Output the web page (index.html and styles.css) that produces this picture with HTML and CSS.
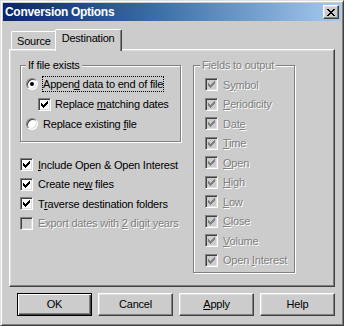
FILE: index.html
```html
<!DOCTYPE html>
<html lang="en">
<head>
  <meta charset="utf-8" />
  <title>Conversion Options</title>
  <link rel="stylesheet" href="styles.css">
</head>
<body>
  <div class="window">
    <div class="titlebar">
      <span class="title">Conversion Options</span>
      <button class="close"><svg width="8" height="7" viewBox="0 0 8 7"><path d="M0 0h2v1H0zM6 0h2v1H6zM1 1h2v1H1zM5 1h2v1H5zM2 2h4v1H2zM3 3h2v1H3zM2 4h4v1H2zM1 5h2v1H1zM5 5h2v1H5zM0 6h2v1H0zM6 6h2v1H6z" fill="#000"/></svg></button>
    </div>

    <div class="tabs">
      <div class="tab">Source</div>
      <div class="tab active">Destination</div>
    </div>

    <div class="panel">
      <div class="left">
        <div class="group">
          <div class="group-title">If file exists</div>
          <div class="rows exists">
            <div class="row focus-row"><span class="radio on"></span><span class="focus">Appen<u>d</u> data to end of file</span></div>
            <div class="row indent"><span class="check on"><svg width="7" height="7" viewBox="0 0 7 7"><path d="M0 2H1V3H2V4H3V3H4V2H5V1H6V0H7V3H6V4H5V5H4V6H3V7H2V6H1V5H0Z"/></svg></span><span>Replace <u>m</u>atching dates</span></div>
            <div class="row"><span class="radio"></span><span>Replace existing <u>f</u>ile</span></div>
          </div>
        </div>

        <div class="opts">
          <div class="row"><span class="check on"><svg width="7" height="7" viewBox="0 0 7 7"><path d="M0 2H1V3H2V4H3V3H4V2H5V1H6V0H7V3H6V4H5V5H4V6H3V7H2V6H1V5H0Z"/></svg></span><span><u>I</u>nclude Open &amp; Open Interest</span></div>
          <div class="row"><span class="check on"><svg width="7" height="7" viewBox="0 0 7 7"><path d="M0 2H1V3H2V4H3V3H4V2H5V1H6V0H7V3H6V4H5V5H4V6H3V7H2V6H1V5H0Z"/></svg></span><span>Create ne<u>w</u> files</span></div>
          <div class="row"><span class="check on"><svg width="7" height="7" viewBox="0 0 7 7"><path d="M0 2H1V3H2V4H3V3H4V2H5V1H6V0H7V3H6V4H5V5H4V6H3V7H2V6H1V5H0Z"/></svg></span><span>T<u>r</u>averse destination folders</span></div>
          <div class="row disabled"><span class="check"></span><span>Export dates with <u>2</u> digit years</span></div>
        </div>
      </div>

      <div class="group fields disabled">
        <div class="group-title">Fields to output</div>
        <div class="rows">
          <div class="row"><span class="check on"><svg width="7" height="7" viewBox="0 0 7 7"><path d="M0 2H1V3H2V4H3V3H4V2H5V1H6V0H7V3H6V4H5V5H4V6H3V7H2V6H1V5H0Z"/></svg></span><span>S<u>y</u>mbol</span></div>
          <div class="row"><span class="check on"><svg width="7" height="7" viewBox="0 0 7 7"><path d="M0 2H1V3H2V4H3V3H4V2H5V1H6V0H7V3H6V4H5V5H4V6H3V7H2V6H1V5H0Z"/></svg></span><span><u>P</u>eriodicity</span></div>
          <div class="row"><span class="check on"><svg width="7" height="7" viewBox="0 0 7 7"><path d="M0 2H1V3H2V4H3V3H4V2H5V1H6V0H7V3H6V4H5V5H4V6H3V7H2V6H1V5H0Z"/></svg></span><span>Dat<u>e</u></span></div>
          <div class="row"><span class="check on"><svg width="7" height="7" viewBox="0 0 7 7"><path d="M0 2H1V3H2V4H3V3H4V2H5V1H6V0H7V3H6V4H5V5H4V6H3V7H2V6H1V5H0Z"/></svg></span><span><u>T</u>ime</span></div>
          <div class="row"><span class="check on"><svg width="7" height="7" viewBox="0 0 7 7"><path d="M0 2H1V3H2V4H3V3H4V2H5V1H6V0H7V3H6V4H5V5H4V6H3V7H2V6H1V5H0Z"/></svg></span><span><u>O</u>pen</span></div>
          <div class="row"><span class="check on"><svg width="7" height="7" viewBox="0 0 7 7"><path d="M0 2H1V3H2V4H3V3H4V2H5V1H6V0H7V3H6V4H5V5H4V6H3V7H2V6H1V5H0Z"/></svg></span><span><u>H</u>igh</span></div>
          <div class="row"><span class="check on"><svg width="7" height="7" viewBox="0 0 7 7"><path d="M0 2H1V3H2V4H3V3H4V2H5V1H6V0H7V3H6V4H5V5H4V6H3V7H2V6H1V5H0Z"/></svg></span><span><u>L</u>ow</span></div>
          <div class="row"><span class="check on"><svg width="7" height="7" viewBox="0 0 7 7"><path d="M0 2H1V3H2V4H3V3H4V2H5V1H6V0H7V3H6V4H5V5H4V6H3V7H2V6H1V5H0Z"/></svg></span><span><u>C</u>lose</span></div>
          <div class="row"><span class="check on"><svg width="7" height="7" viewBox="0 0 7 7"><path d="M0 2H1V3H2V4H3V3H4V2H5V1H6V0H7V3H6V4H5V5H4V6H3V7H2V6H1V5H0Z"/></svg></span><span><u>V</u>olume</span></div>
          <div class="row"><span class="check on"><svg width="7" height="7" viewBox="0 0 7 7"><path d="M0 2H1V3H2V4H3V3H4V2H5V1H6V0H7V3H6V4H5V5H4V6H3V7H2V6H1V5H0Z"/></svg></span><span>Open <u>I</u>nterest</span></div>
        </div>
      </div>
    </div>

    <div class="buttons">
      <button class="btn default">OK</button>
      <button class="btn">Cancel</button>
      <button class="btn"><u>A</u>pply</button>
      <button class="btn">Help</button>
    </div>
  </div>
</body>
</html>
```

FILE: styles.css
```css
* {
  box-sizing: border-box;
}

body {
  margin: 0;
  background: #cccccc;
  font-family: "Liberation Sans", Arial, sans-serif;
  font-size: 11px;
  letter-spacing: -0.2px;
  color: #000;
}

u {
  text-decoration-thickness: 1px;
  text-underline-offset: 1px;
}

.window {
  width: 344px;
  height: 326px;
  background: #cccccc;
  border: 1px solid;
  border-color: #dfdfdf #404040 #404040 #dfdfdf;
  box-shadow: inset 1px 1px #fff, inset -1px -1px #808080;
  padding: 2px;
  display: flex;
  flex-direction: column;
}

.titlebar {
  height: 18px;
  flex: none;
  display: flex;
  align-items: center;
  justify-content: space-between;
  padding: 0 2px;
  background: linear-gradient(90deg, #0a246a, #3a6ea5 45%, #a6caf0);
  color: #fff;
}

.title {
  font-weight: bold;
  font-size: 12px;
  letter-spacing: -0.3px;
}

.close {
  width: 16px;
  height: 14px;
  padding: 0;
  display: flex;
  align-items: center;
  justify-content: center;
  background: #cccccc;
  border: 1px solid;
  border-color: #fff #404040 #404040 #fff;
  box-shadow: inset -1px -1px #808080, inset 1px 1px #dfdfdf;
}

/* tabs */
.tabs {
  display: flex;
  align-items: flex-end;
  height: 20px;
  margin: 8px 6px 0;
  padding-left: 2px;
  flex: none;
}

.tab {
  height: 18px;
  padding: 2px 5px 0;
  border: 1px solid;
  border-bottom: 0;
  border-color: #fff #404040 transparent #fff;
  border-radius: 2px 2px 0 0;
  box-shadow: inset -1px 0 #808080;
  line-height: 14px;
  white-space: nowrap;
}

.tab.active {
  height: 22px;
  margin: 0 -2px -2px;
  padding: 1px 6px 0;
  position: relative;
  z-index: 1;
  background: #cccccc;
}

.panel {
  height: 238px;
  flex: none;
  margin: 0 6px;
  border: 1px solid;
  border-color: #fff #404040 #404040 #fff;
  box-shadow: inset -1px -1px #808080, inset 1px 1px #dfdfdf;
  padding: 15px 0 0 10px;
  display: flex;
  gap: 12px;
  align-items: flex-start;
}

.left {
  width: 161px;
}

/* group boxes */
.group {
  border: 1px solid #808080;
  box-shadow: inset 1px 1px #fff, 1px 1px #fff;
}

.group-title {
  width: fit-content;
  margin: -7px 0 0 5px;
  padding: 0 2px;
  background: #cccccc;
  line-height: 13px;
}

.rows.exists {
  padding: 2px 0 7px 5px;
}

.row {
  display: flex;
  align-items: center;
  gap: 5px;
  height: 20px;
  white-space: nowrap;
}

.row.indent {
  padding-left: 12px;
  gap: 4px;
}

.row.focus-row {
  gap: 4px;
}

.focus {
  outline: 1px dotted #000;
  outline-offset: -1px;
  padding: 1px;
  line-height: 14px;
}

.opts {
  margin-top: 13px;
}

.opts .row {
  height: 19.5px;
}

.fields {
  width: 102px;
}

.fields .group-title {
  margin-left: 6px;
}

.fields .rows {
  padding: 3px 0 2px 11px;
}

.fields .row {
  height: 19.5px;
}

.disabled {
  color: #808080;
  text-shadow: 1px 1px #fff;
}

/* controls */
.check {
  width: 13px;
  height: 13px;
  flex: none;
  background: #fff;
  border: 1px solid;
  border-color: #808080 #fff #fff #808080;
  box-shadow: inset 1px 1px #404040, inset -1px -1px #dfdfdf;
  display: flex;
  align-items: center;
  justify-content: center;
}

.check svg {
  fill: #000;
}

.disabled .check {
  background: #cccccc;
}

.disabled .check svg {
  fill: #808080;
}

.radio {
  width: 12px;
  height: 12px;
  flex: none;
  border-radius: 50%;
  background: #fff;
  border: 1px solid;
  border-color: #808080 #fff #fff #808080;
  box-shadow: inset 1px 1px #404040, inset -1px -1px #dfdfdf;
  display: flex;
  align-items: center;
  justify-content: center;
}

.radio.on::after {
  content: "";
  width: 4px;
  height: 4px;
  border-radius: 50%;
  background: #000;
}

/* buttons */
.buttons {
  display: flex;
  justify-content: flex-end;
  gap: 6px;
  margin: 6px 6px 0;
}

.btn {
  width: 75px;
  height: 23px;
  padding: 0 0 2px;
  font: inherit;
  letter-spacing: inherit;
  color: #000;
  background: #cccccc;
  border: 1px solid;
  border-color: #fff #404040 #404040 #fff;
  box-shadow: inset -1px -1px #808080, inset 1px 1px #dfdfdf;
}

.btn.default {
  border-color: #000;
  box-shadow: inset 1px 1px #fff, inset -1px -1px #404040, inset -2px -2px #808080;
}
```
